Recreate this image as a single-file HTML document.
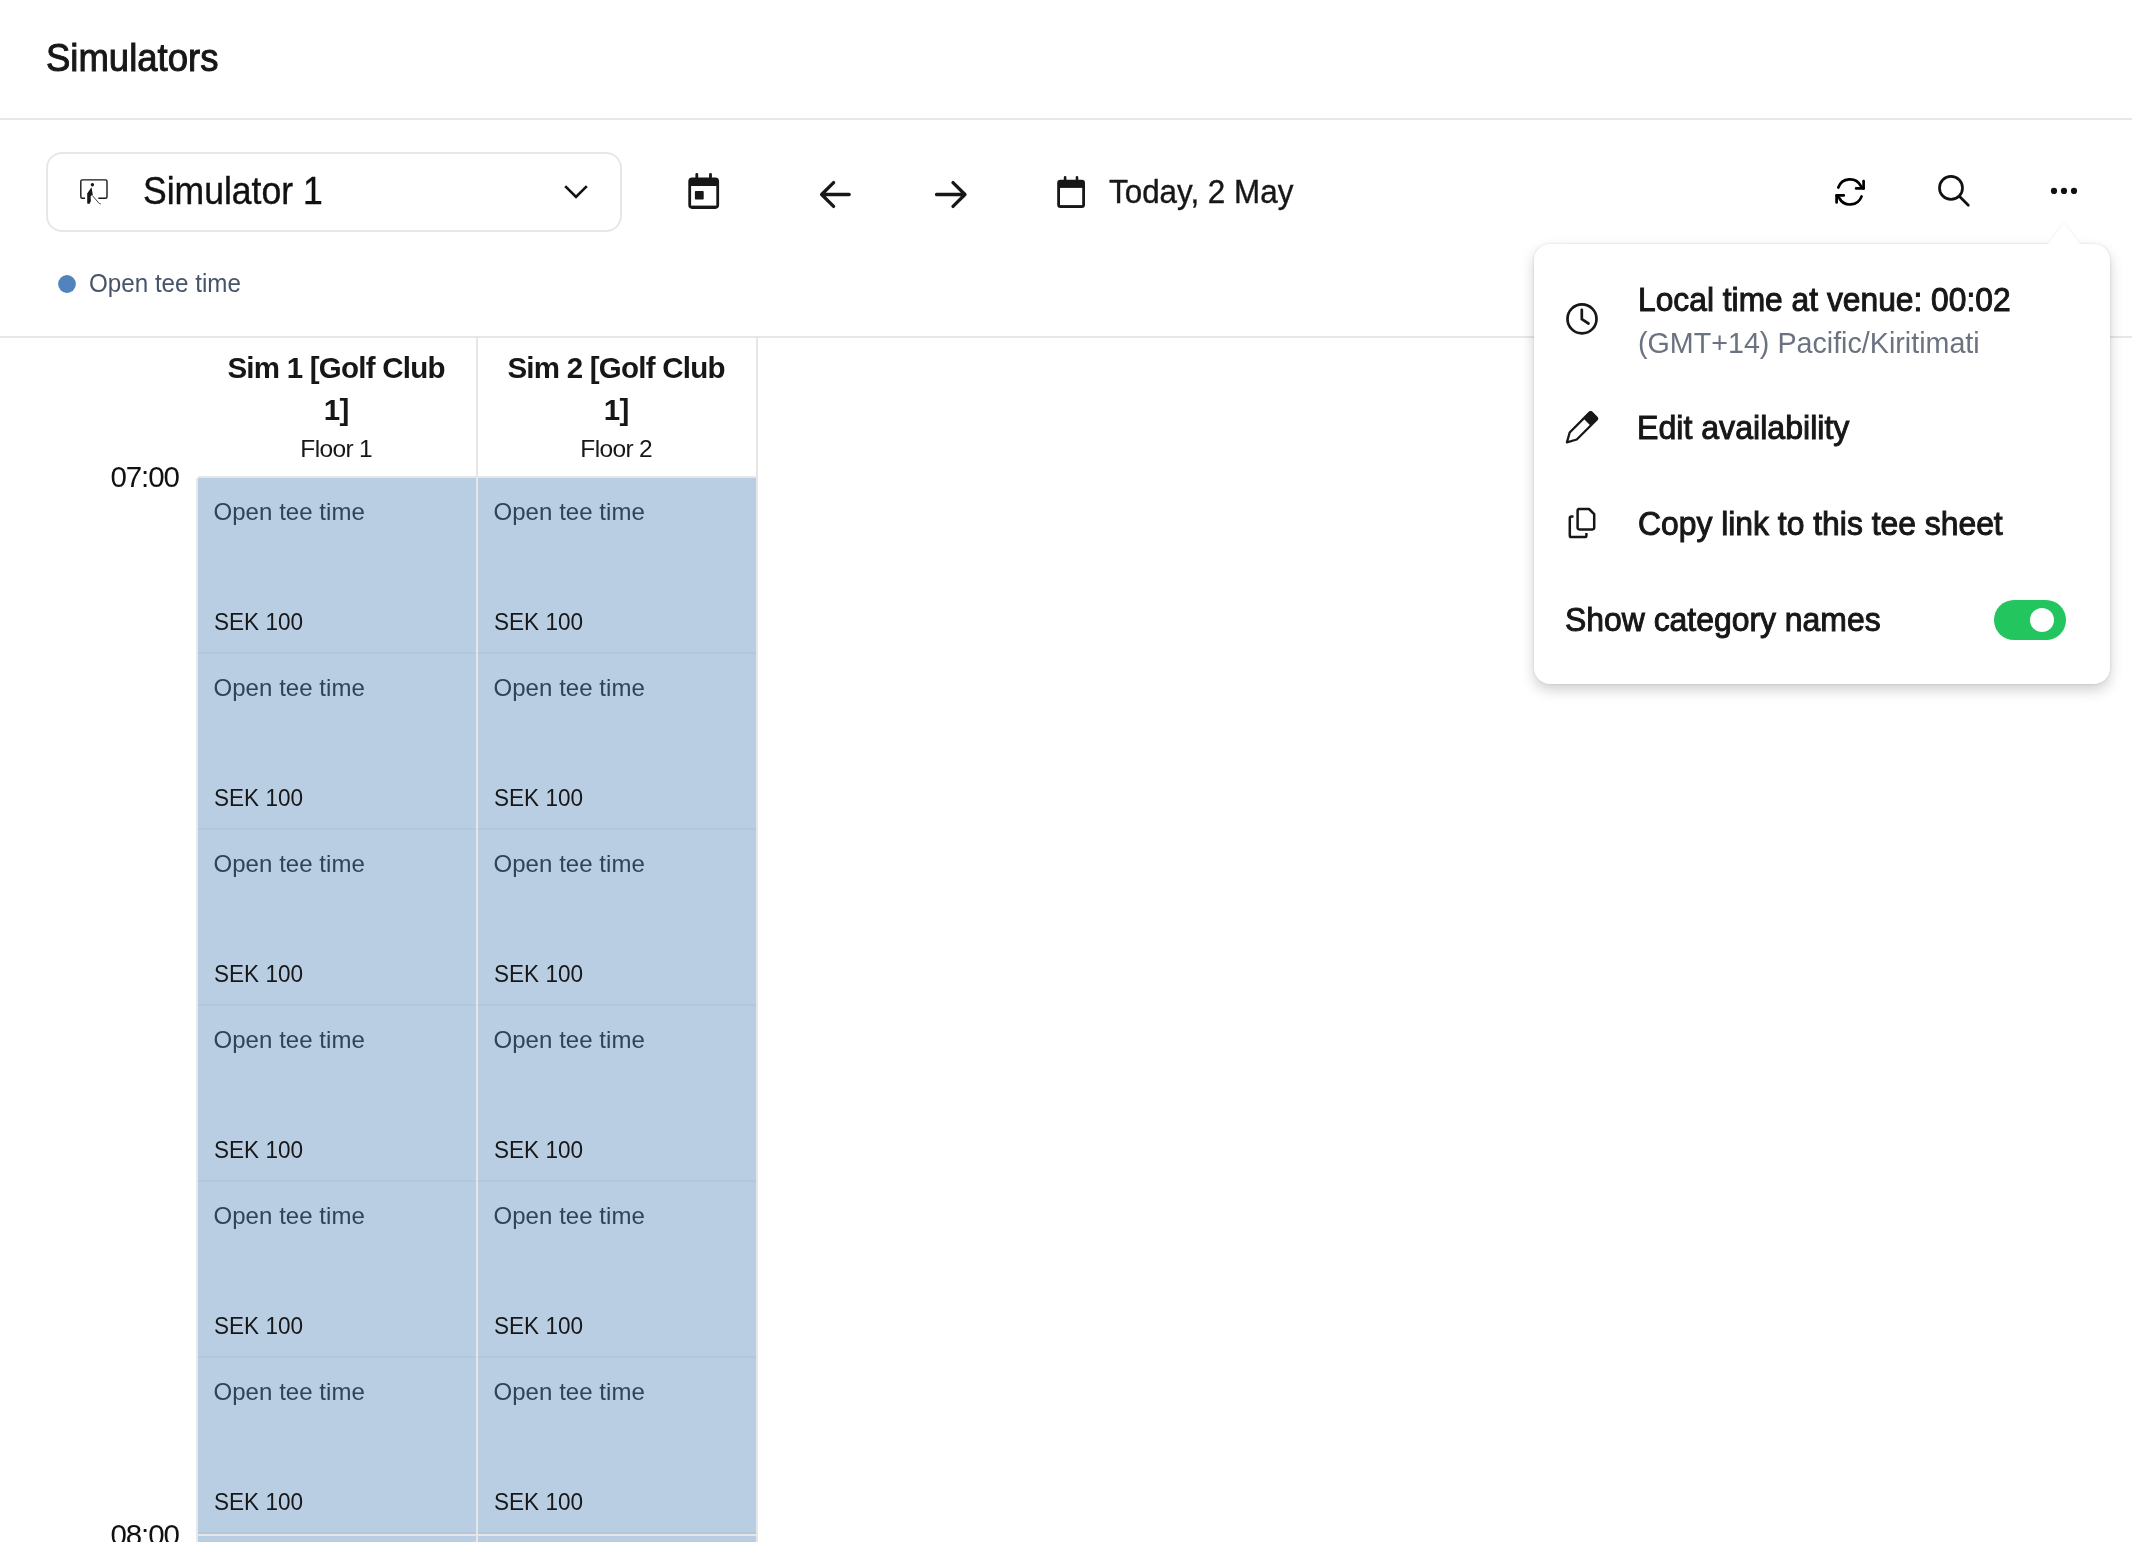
<!DOCTYPE html>
<html><head><meta charset="utf-8">
<style>
html,body{margin:0;padding:0;background:#fff;width:2132px;height:1542px;overflow:hidden;}
body{position:relative;font-family:"Liberation Sans",sans-serif;color:#171717;}
.t{position:absolute;white-space:nowrap;line-height:1;}
.g{position:absolute;left:0;top:0;width:2132px;height:1542px;will-change:transform;}
svg{position:absolute;left:0;top:0;}
.pop{position:absolute;left:0;top:0;width:2132px;height:1542px;z-index:5;pointer-events:none;will-change:transform;}
.card{position:absolute;left:1534px;top:244px;width:576px;height:440px;background:#fff;border-radius:16px;
 box-shadow:0 6px 14px rgba(0,0,0,0.19), 0 0 3px rgba(0,0,0,0.12);}
</style></head>
<body>
<svg width="2132" height="1542" viewBox="0 0 2132 1542">
<rect x="0" y="118" width="2132" height="2" fill="#e5e7eb"/>
<rect x="47" y="153" width="574" height="78" rx="15" ry="15" fill="#fff" stroke="#e5e7eb" stroke-width="2"/>
<g fill="none" stroke="#171717" stroke-width="1.4" stroke-linejoin="round"><path d="M85,198.3 H82.3 Q80.8,198.3 80.8,196.8 V181.4 Q80.8,179.9 82.3,179.9 H105.5 Q107,179.9 107,181.4 V196.8 Q107,198.3 105.5,198.3 H98.3"/><path d="M92.3,195.5 L99.3,203.6 L100.8,203.9" stroke-width="0.8"/></g>
<circle cx="92.4" cy="184.7" r="1.7" fill="#171717"/>
<path d="M91.3,187.4 L87.2,193.4 L87.2,203.6 L89.4,204 L90.9,201 L90.6,196.4 L91.9,195.1 L92.8,195.1 L91.6,187.6 Z" fill="#171717"/>
<polyline points="565.2,186.2 576,197 586.8,186.2" fill="none" stroke="#111" stroke-width="2.6"/>
<rect x="688.3" y="177.6" width="30.8" height="31.3" rx="3.8" fill="#171717"/>
<rect x="691.1" y="186" width="25.2" height="19.6" fill="#fff"/>
<rect x="694.9" y="191" width="8.8" height="8.6" rx="0.8" fill="#171717"/>
<path d="M696.8,174.3 V178.5 M710.5,174.3 V178.5" stroke="#171717" stroke-width="2.8" stroke-linecap="round"/>
<g fill="none" stroke="#171717" stroke-width="3.3" stroke-linecap="round" stroke-linejoin="round"><path d="M822,194.5 H849.2 M833.6,182.6 L821.6,194.5 L833.6,206.4"/><path d="M936.5,194.5 H964.8 M953,182.6 L965,194.5 L953,206.4"/></g>
<rect x="1057.2" y="179.7" width="27.8" height="28.2" rx="3.2" fill="#171717"/>
<rect x="1060" y="187.9" width="22.2" height="17.2" fill="#fff"/>
<path d="M1065.1,177.2 V180.5 M1077,177.2 V180.5" stroke="#171717" stroke-width="2.6" stroke-linecap="round"/>
<g fill="none" stroke="#000" stroke-width="2.7" stroke-linecap="round" stroke-linejoin="round"><path d="M1838.3,187.5 A12.3,12.3 0 0 1 1860.8,185.9 L1863.6,188.4"/><path d="M1863.6,181.1 V188.4 H1856.1"/><path d="M1861.6,196.4 A12.3,12.3 0 0 1 1839.2,198 L1836.6,195.4"/><path d="M1843.8,195.4 H1836.6 V202.5"/></g>
<g fill="none" stroke="#111" stroke-width="2.7" stroke-linecap="round"><circle cx="1951" cy="187.9" r="11.5"/><path d="M1959.6,196.5 L1968.3,205.2"/></g>
<circle cx="2054" cy="190.9" r="3.1" fill="#111"/>
<circle cx="2064" cy="190.9" r="3.1" fill="#111"/>
<circle cx="2074" cy="190.9" r="3.1" fill="#111"/>
<rect x="0" y="336" width="2132" height="2" fill="#e5e7eb"/>
<circle cx="67" cy="284" r="8.9" fill="#5184bd"/>
<rect x="476" y="338" width="2" height="1204" fill="#e6e6e6"/>
<rect x="756" y="338" width="2" height="1204" fill="#e6e6e6"/>
<rect x="198" y="476" width="560" height="2" fill="#e6e6e6"/>
<rect x="196" y="478" width="2" height="1064" fill="#e7e8ec"/>
<rect x="198" y="478" width="278" height="176" fill="#b9cee3"/>
<rect x="198" y="652" width="278" height="2" fill="#b2c6dd"/>
<rect x="198" y="654" width="278" height="176" fill="#b9cee3"/>
<rect x="198" y="828" width="278" height="2" fill="#b2c6dd"/>
<rect x="198" y="830" width="278" height="176" fill="#b9cee3"/>
<rect x="198" y="1004" width="278" height="2" fill="#b2c6dd"/>
<rect x="198" y="1006" width="278" height="176" fill="#b9cee3"/>
<rect x="198" y="1180" width="278" height="2" fill="#b2c6dd"/>
<rect x="198" y="1182" width="278" height="176" fill="#b9cee3"/>
<rect x="198" y="1356" width="278" height="2" fill="#b2c6dd"/>
<rect x="198" y="1358" width="278" height="176" fill="#b9cee3"/>
<rect x="198" y="1532" width="278" height="2" fill="#b2c6dd"/>
<rect x="198" y="1536" width="278" height="176" fill="#b9cee3"/>
<rect x="198" y="1710" width="278" height="2" fill="#b2c6dd"/>
<rect x="478" y="478" width="278" height="176" fill="#b9cee3"/>
<rect x="478" y="652" width="278" height="2" fill="#b2c6dd"/>
<rect x="478" y="654" width="278" height="176" fill="#b9cee3"/>
<rect x="478" y="828" width="278" height="2" fill="#b2c6dd"/>
<rect x="478" y="830" width="278" height="176" fill="#b9cee3"/>
<rect x="478" y="1004" width="278" height="2" fill="#b2c6dd"/>
<rect x="478" y="1006" width="278" height="176" fill="#b9cee3"/>
<rect x="478" y="1180" width="278" height="2" fill="#b2c6dd"/>
<rect x="478" y="1182" width="278" height="176" fill="#b9cee3"/>
<rect x="478" y="1356" width="278" height="2" fill="#b2c6dd"/>
<rect x="478" y="1358" width="278" height="176" fill="#b9cee3"/>
<rect x="478" y="1532" width="278" height="2" fill="#b2c6dd"/>
<rect x="478" y="1536" width="278" height="176" fill="#b9cee3"/>
<rect x="478" y="1710" width="278" height="2" fill="#b2c6dd"/>
<rect x="198" y="1534" width="558" height="2" fill="#e6e6e6"/>
</svg>
<div class="g">
<div class="t" style="left:46.06px;top:37.59px;font-size:39px;transform:scaleX(0.9357);transform-origin:0 0;-webkit-text-stroke:1.0px #171717;">Simulators</div>
<div class="t" style="left:142.93px;top:171.93px;font-size:38px;transform:scaleX(0.9351);transform-origin:0 0;color:#111111;-webkit-text-stroke:0.4px #111111;">Simulator 1</div>
<div class="t" style="left:1108.88px;top:174.32px;font-size:34px;transform:scaleX(0.9231);transform-origin:0 0;-webkit-text-stroke:0.4px #171717;">Today, 2 May</div>
<div class="t" style="left:89.33px;top:271.04px;font-size:25px;transform:scaleX(0.9677);transform-origin:0 0;color:#475569;">Open tee time</div>
<div class="t" style="left:136.50px;width:400px;text-align:center;top:353.43px;font-size:29.5px;letter-spacing:-0.75px;text-indent:-0.75px;font-weight:bold;">Sim 1 [Golf Club</div>
<div class="t" style="left:136.50px;width:400px;text-align:center;top:395.13px;font-size:29.5px;letter-spacing:-0.6px;text-indent:-0.6px;font-weight:bold;">1]</div>
<div class="t" style="left:136.50px;width:400px;text-align:center;top:436.86px;font-size:24.5px;letter-spacing:-0.65px;text-indent:-0.65px;">Floor 1</div>
<div class="t" style="left:416.50px;width:400px;text-align:center;top:353.43px;font-size:29.5px;letter-spacing:-0.75px;text-indent:-0.75px;font-weight:bold;">Sim 2 [Golf Club</div>
<div class="t" style="left:416.50px;width:400px;text-align:center;top:395.13px;font-size:29.5px;letter-spacing:-0.6px;text-indent:-0.6px;font-weight:bold;">1]</div>
<div class="t" style="left:416.50px;width:400px;text-align:center;top:436.86px;font-size:24.5px;letter-spacing:-0.65px;text-indent:-0.65px;">Floor 2</div>
<div class="t" style="right:1952.20px;text-align:right;top:462.23px;font-size:29.5px;letter-spacing:-1.15px;margin-right:1.15px;color:#111111;">07:00</div>
<div class="t" style="right:1952.20px;text-align:right;top:1520.23px;font-size:29.5px;letter-spacing:-1.15px;margin-right:1.15px;color:#111111;">08:00</div>
<div class="t" style="left:213.50px;top:499.88px;font-size:24px;letter-spacing:0.05px;color:#2f4459;">Open tee time</div>
<div class="t" style="left:213.66px;top:609.88px;font-size:24px;transform:scaleX(0.9398);transform-origin:0 0;">SEK 100</div>
<div class="t" style="left:213.50px;top:675.88px;font-size:24px;letter-spacing:0.05px;color:#2f4459;">Open tee time</div>
<div class="t" style="left:213.66px;top:785.88px;font-size:24px;transform:scaleX(0.9398);transform-origin:0 0;">SEK 100</div>
<div class="t" style="left:213.50px;top:851.88px;font-size:24px;letter-spacing:0.05px;color:#2f4459;">Open tee time</div>
<div class="t" style="left:213.66px;top:961.88px;font-size:24px;transform:scaleX(0.9398);transform-origin:0 0;">SEK 100</div>
<div class="t" style="left:213.50px;top:1027.88px;font-size:24px;letter-spacing:0.05px;color:#2f4459;">Open tee time</div>
<div class="t" style="left:213.66px;top:1137.88px;font-size:24px;transform:scaleX(0.9398);transform-origin:0 0;">SEK 100</div>
<div class="t" style="left:213.50px;top:1203.88px;font-size:24px;letter-spacing:0.05px;color:#2f4459;">Open tee time</div>
<div class="t" style="left:213.66px;top:1313.88px;font-size:24px;transform:scaleX(0.9398);transform-origin:0 0;">SEK 100</div>
<div class="t" style="left:213.50px;top:1379.88px;font-size:24px;letter-spacing:0.05px;color:#2f4459;">Open tee time</div>
<div class="t" style="left:213.66px;top:1489.88px;font-size:24px;transform:scaleX(0.9398);transform-origin:0 0;">SEK 100</div>
<div class="t" style="left:213.50px;top:1557.88px;font-size:24px;letter-spacing:0.05px;color:#2f4459;">Open tee time</div>
<div class="t" style="left:213.66px;top:1667.88px;font-size:24px;transform:scaleX(0.9398);transform-origin:0 0;">SEK 100</div>
<div class="t" style="left:493.50px;top:499.88px;font-size:24px;letter-spacing:0.05px;color:#2f4459;">Open tee time</div>
<div class="t" style="left:493.66px;top:609.88px;font-size:24px;transform:scaleX(0.9398);transform-origin:0 0;">SEK 100</div>
<div class="t" style="left:493.50px;top:675.88px;font-size:24px;letter-spacing:0.05px;color:#2f4459;">Open tee time</div>
<div class="t" style="left:493.66px;top:785.88px;font-size:24px;transform:scaleX(0.9398);transform-origin:0 0;">SEK 100</div>
<div class="t" style="left:493.50px;top:851.88px;font-size:24px;letter-spacing:0.05px;color:#2f4459;">Open tee time</div>
<div class="t" style="left:493.66px;top:961.88px;font-size:24px;transform:scaleX(0.9398);transform-origin:0 0;">SEK 100</div>
<div class="t" style="left:493.50px;top:1027.88px;font-size:24px;letter-spacing:0.05px;color:#2f4459;">Open tee time</div>
<div class="t" style="left:493.66px;top:1137.88px;font-size:24px;transform:scaleX(0.9398);transform-origin:0 0;">SEK 100</div>
<div class="t" style="left:493.50px;top:1203.88px;font-size:24px;letter-spacing:0.05px;color:#2f4459;">Open tee time</div>
<div class="t" style="left:493.66px;top:1313.88px;font-size:24px;transform:scaleX(0.9398);transform-origin:0 0;">SEK 100</div>
<div class="t" style="left:493.50px;top:1379.88px;font-size:24px;letter-spacing:0.05px;color:#2f4459;">Open tee time</div>
<div class="t" style="left:493.66px;top:1489.88px;font-size:24px;transform:scaleX(0.9398);transform-origin:0 0;">SEK 100</div>
<div class="t" style="left:493.50px;top:1557.88px;font-size:24px;letter-spacing:0.05px;color:#2f4459;">Open tee time</div>
<div class="t" style="left:493.66px;top:1667.88px;font-size:24px;transform:scaleX(0.9398);transform-origin:0 0;">SEK 100</div>
</div>
<div class="pop">
<div class="card"></div>
<svg width="2132" height="1542" viewBox="0 0 2132 1542" style="filter:drop-shadow(0 -1px 1.5px rgba(0,0,0,0.06))">
<path d="M2047.8,244.5 L2064,223.5 L2080.2,244.5 Z" fill="#fff"/>
</svg>
<svg width="2132" height="1542" viewBox="0 0 2132 1542">
<path d="M2038,244.6 H2047.8 L2064,223.5 L2080.2,244.6 H2090 V252 H2038 Z" fill="#fff"/>
</svg>
<svg width="2132" height="1542" viewBox="0 0 2132 1542">
<g fill="none" stroke="#171717" stroke-width="2.7" stroke-linecap="round" stroke-linejoin="round"><circle cx="1582" cy="318.9" r="14.5"/><path d="M1581.8,309.8 V319.2 L1588.5,323.5"/></g>
<g transform="translate(1565.8,443.4) rotate(-45)"><path d="M1.6,0 L10.5,-5 H38.5 Q40,-5 40,-3.5 V3.5 Q40,5 38.5,5 H10.5 Z" fill="none" stroke="#171717" stroke-width="2.3" stroke-linejoin="round"/><rect x="30" y="-5.5" width="11" height="11" rx="1.5" fill="#171717"/></g>
<g fill="none" stroke="#171717" stroke-width="2.5" stroke-linejoin="round"><path d="M1578.6,509 H1589 L1594.2,514.2 V527.6 Q1594.2,529.4 1592.4,529.4 H1579.4 Q1577.6,529.4 1577.6,527.6 V510.8 Q1577.6,509 1579.4,509 Z"/><path d="M1573.5,516.6 H1571.4 Q1569.8,516.6 1569.8,518.2 V535.4 Q1569.8,537 1571.4,537 H1584.8 Q1586.4,537 1586.4,535.4 V533"/></g>
<rect x="1994" y="600" width="72" height="40" rx="20" fill="#22c55e"/>
<circle cx="2042" cy="620" r="12" fill="#fff"/>
</svg>
<div class="t" style="left:1637.90px;top:283.34px;font-size:33.5px;transform:scaleX(0.9482);transform-origin:0 0;-webkit-text-stroke:1.0px #171717;">Local time at venue: 00:02</div>
<div class="t" style="left:1637.86px;top:328.43px;font-size:29.5px;transform:scaleX(0.9718);transform-origin:0 0;color:#6b7280;">(GMT+14) Pacific/Kiritimati</div>
<div class="t" style="left:1636.98px;top:411.34px;font-size:33.5px;transform:scaleX(0.9586);transform-origin:0 0;-webkit-text-stroke:1.0px #171717;">Edit availability</div>
<div class="t" style="left:1637.95px;top:507.34px;font-size:33.5px;transform:scaleX(0.9507);transform-origin:0 0;-webkit-text-stroke:1.0px #171717;">Copy link to this tee sheet</div>
<div class="t" style="left:1565.36px;top:602.02px;font-size:34px;transform:scaleX(0.9382);transform-origin:0 0;-webkit-text-stroke:1.0px #171717;">Show category names</div>

</div>
</body></html>
